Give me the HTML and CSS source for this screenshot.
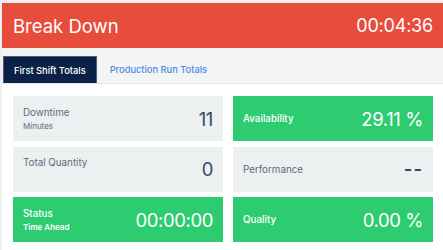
FILE: index.html
```html
<!DOCTYPE html>
<html lang="en">
<head>
  <meta charset="UTF-8">
  <title>Line Status</title>
  <link rel="stylesheet" href="styles.css">
</head>
<body>

  <div class="page">
    <div class="status-bar">
      <h1>Break Down</h1>
      <span class="timer">00:04:36</span>
    </div>

    <div class="tabs">
      <a href="#" class="tab active">First Shift Totals</a>
      <a href="#" class="tab">Production Run Totals</a>
    </div>

    <div class="grid">
      <div class="card">
        <div class="label">
          <div class="title">Downtime</div>
          <div class="sub">Minutes</div>
        </div>
        <div class="value">11</div>
      </div>

      <div class="card green">
        <div class="label">
          <div class="title">Availability</div>
        </div>
        <div class="value">29.11 %</div>
      </div>

      <div class="card">
        <div class="label top">
          <div class="title">Total Quantity</div>
        </div>
        <div class="value">0</div>
      </div>

      <div class="card">
        <div class="label">
          <div class="title">Performance</div>
        </div>
        <div class="value dashes">--</div>
      </div>

      <div class="card green">
        <div class="label">
          <div class="title">Status</div>
          <div class="sub bold">Time Ahead</div>
        </div>
        <div class="value">00:00:00</div>
      </div>

      <div class="card green">
        <div class="label">
          <div class="title">Quality</div>
        </div>
        <div class="value">0.00 %</div>
      </div>
    </div>
  </div>

</body>
</html>
```

FILE: styles.css
```css
body {
  font-family: Inter, 'Noto Sans', sans-serif;
  background-color: #efefef;
  margin: 0;
  padding: 3px 0 0 2px;
}

.page {
  background: #ffffff;
  height: 247px;
  overflow: hidden;
}

.status-bar {
  background-color: #e74c3c;
  color: white;
  height: 45px;
  padding: 0 10px 0 11px;
  display: flex;
  justify-content: space-between;
  align-items: center;
}

.status-bar h1 {
  margin: 0;
  font-size: 18.5px;
  font-weight: 400;
}

.timer {
  font-size: 18px;
  letter-spacing: -0.2px;
}

.tabs {
  background-color: #f4f4f4;
  border-bottom: 1px solid #e6e6e6;
  height: 35px;
  padding: 0 0 0 1px;
  display: flex;
  align-items: flex-end;
}

.tab {
  font-size: 9.3px;
  font-weight: 500;
  color: #4a90e2;
  text-decoration: none;
  height: 27px;
  padding: 0 10px;
  display: flex;
  align-items: center;
  margin-right: 3px;
}

.tab.active {
  background-color: #0b2148;
  color: white;
  border: 1px solid #4c5d78;
  border-bottom: none;
  box-sizing: border-box;
}

.grid {
  display: grid;
  grid-template-columns: 210px 200px;
  grid-auto-rows: 45px;
  column-gap: 10px;
  row-gap: 5.7px;
  padding: 12px 0 0 11px;
}

.card {
  background-color: #ecf0f1;
  padding: 0 10px;
  display: flex;
  justify-content: space-between;
  align-items: center;
}

.card.green {
  background-color: #2ecc71;
  color: white;
}

.label .title {
  font-size: 9.8px;
  color: #5d6b78;
}

.label .sub {
  font-size: 8px;
  color: #5d6b78;
  margin-top: 3px;
}

.label.top {
  align-self: flex-start;
  padding-top: 10px;
}

.green .label .title,
.green .label .sub {
  color: white;
  font-weight: 500;
}

.label .sub.bold {
  font-weight: 600;
}

.value {
  font-size: 18.5px;
  font-weight: 400;
  letter-spacing: -0.4px;
  color: #34495e;
}

.value.dashes {
  font-weight: 600;
  letter-spacing: 1px;
}

.green .value {
  color: white;
}
```
